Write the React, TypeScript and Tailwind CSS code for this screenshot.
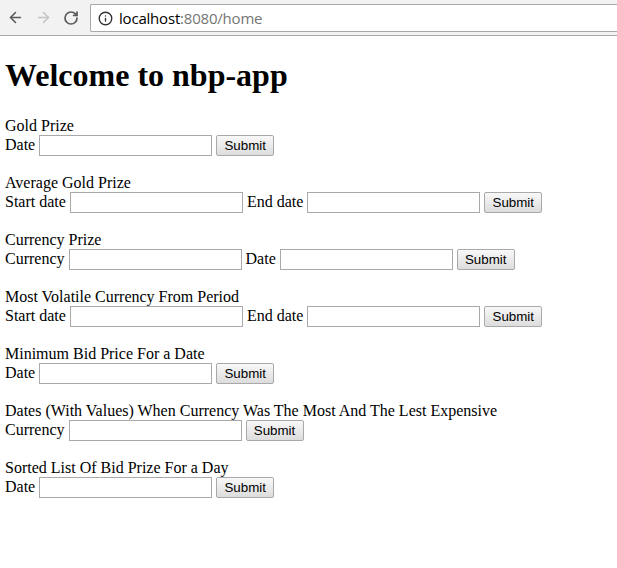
import { ArrowLeft, ArrowRight, RotateCw, Info } from 'lucide-react'

type Field = { label: string }
type Section = { title: string; fields: Field[] }

const sections: Section[] = [
  { title: 'Gold Prize', fields: [{ label: 'Date' }] },
  { title: 'Average Gold Prize', fields: [{ label: 'Start date' }, { label: 'End date' }] },
  { title: 'Currency Prize', fields: [{ label: 'Currency' }, { label: 'Date' }] },
  { title: 'Most Volatile Currency From Period', fields: [{ label: 'Start date' }, { label: 'End date' }] },
  { title: 'Minimum Bid Price For a Date', fields: [{ label: 'Date' }] },
  {
    title: 'Dates (With Values) When Currency Was The Most And The Lest Expensive',
    fields: [{ label: 'Currency' }],
  },
  { title: 'Sorted List Of Bid Prize For a Day', fields: [{ label: 'Date' }] },
]

function Toolbar() {
  return (
    <div className="h-[36px] bg-[#f2f2f2] border-b border-[#a8a8a8] flex items-start">
      <div className="flex items-center h-[35px] pl-[1px]">
        <div className="w-[28px] flex justify-center">
          <ArrowLeft size={17} strokeWidth={2.2} className="text-[#5a5a5a]" />
        </div>
        <div className="w-[28px] flex justify-center">
          <ArrowRight size={17} strokeWidth={2.2} className="text-[#c4c4c4]" />
        </div>
        <div className="w-[28px] flex justify-center">
          <RotateCw size={16} strokeWidth={2.6} className="text-[#5a5a5a]" />
        </div>
      </div>
      <div className="ml-[5px] mt-[4px] h-[28px] flex-1 bg-white border-y border-l border-[#a9a9a9] rounded-l-[2px] flex items-center pl-[7px] gap-[6px]">
        <Info size={15} strokeWidth={2.2} className="text-[#333]" />
        <span className="text-[15px] font-['Open_Sans',sans-serif] tracking-[-0.2px]">
          <span className="text-black">localhost</span>
          <span className="text-[#757575]">:8080/home</span>
        </span>
      </div>
    </div>
  )
}

function FormRow({ fields }: { fields: Field[] }) {
  return (
    <div className="flex items-start gap-[4px] h-[21px]">
      {fields.map((f, i) => (
        <div key={i} className="flex items-start gap-[4px]">
          <span className="leading-[19px]">{f.label}</span>
          <input
            type="text"
            className="w-[173px] h-[21px] border border-[#a9a9a9] bg-white outline-none"
          />
        </div>
      ))}
      <button className="w-[58px] h-[21px] border border-[#a9a9a9] rounded-[2px] bg-gradient-to-b from-[#f8f8f8] to-[#dddddd] text-[13.33px] font-['Liberation_Sans',Arial,sans-serif] text-black leading-[19px]">
        Submit
      </button>
    </div>
  )
}

export default function App() {
  return (
    <div className="min-h-[568px] bg-white text-black">
      <Toolbar />
      <div className="px-[5px] font-['Liberation_Serif','Times_New_Roman',serif] text-[16px]">
        <h1 className="mt-[21px] mb-[22px] text-[32px] font-bold leading-[37px]">Welcome to nbp-app</h1>
        {sections.map((s, i) => (
          <div key={i} className="mb-[17px]">
            <div className="leading-[19px]">{s.title}</div>
            <FormRow fields={s.fields} />
          </div>
        ))}
      </div>
    </div>
  )
}
